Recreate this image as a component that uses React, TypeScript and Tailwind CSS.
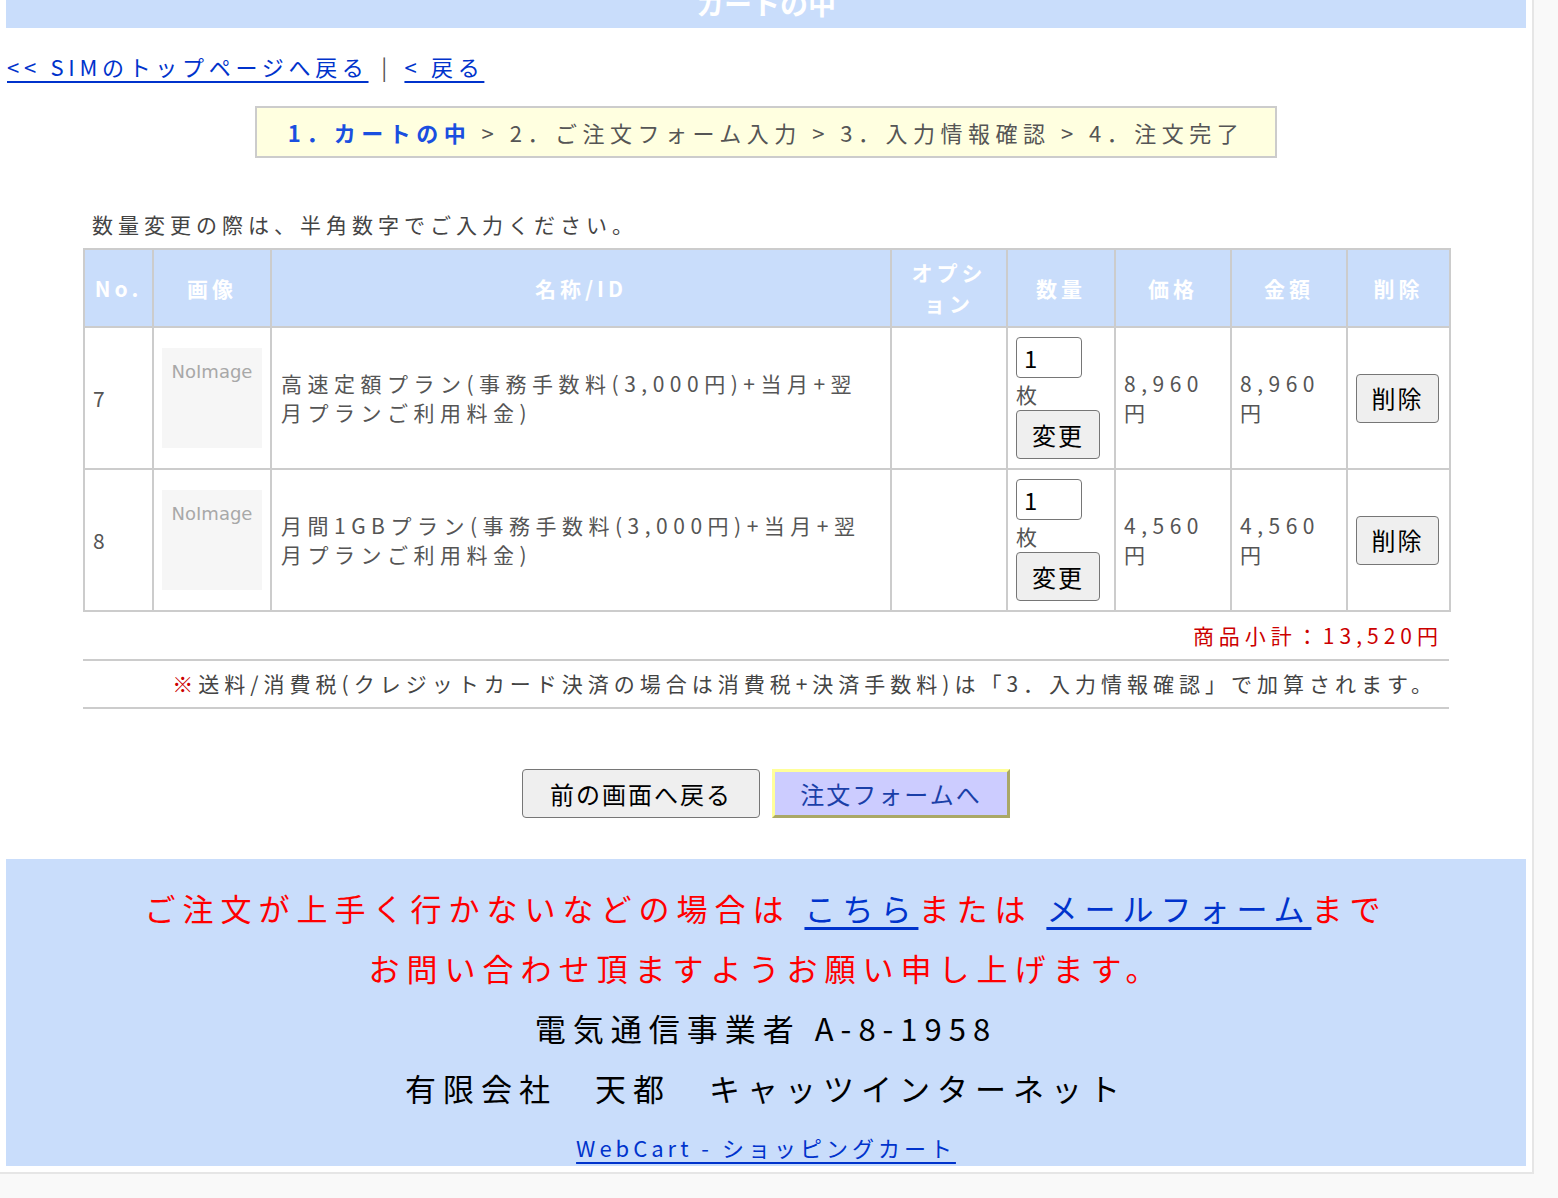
import React from "react";

const items = [
	{
		no: 7,
		name: ["高速定額プラン(事務手数料(3,000円)+当月+翌", "月プランご利用料金)"],
		price: "8,960",
	},
	{
		no: 8,
		name: ["月間1GBプラン(事務手数料(3,000円)+当月+翌", "月プランご利用料金)"],
		price: "4,560",
	},
];

const th =
	"border-2 border-[#cccccc] bg-[#c9ddfb] text-white font-bold text-[21px] tracking-[4px] leading-[31px] text-center align-middle p-0";
const td = "border-2 border-[#cccccc] align-middle px-[8px] py-0";

function GrayButton({ label, className = "" }: { label: string; className?: string }) {
	return (
		<button
			className={`h-[49px] rounded-[4px] border border-[#767676] bg-[#efefef] text-black text-[24px] tracking-[2px] leading-none ${className}`}
		>
			{label}
		</button>
	);
}

export default function App() {
	return (
		<div className="min-h-[1198px] bg-[#f9f9f9] font-['Noto_Sans_CJK_JP','Noto_Sans',sans-serif] text-[#444444]">
			<div className="w-[1534px] bg-white border-r-2 border-b-2 border-[#e6e6e6] px-[6px] pb-[6px]">
				{/* title bar, page is scrolled a little */}
				<div className="h-[28px] overflow-hidden bg-[#c9ddfb] text-center">
					<div className="-mt-[15px] text-[28px] font-bold leading-[36px] text-white">
						カートの中
					</div>
				</div>

				<div className="mt-[23px] pl-[1px] text-[22px] leading-[30px] tracking-[4.7px]">
					<a href="#" className="text-[#0033cc] underline decoration-[2px] underline-offset-[5px]">
						&lt;&lt; SIMのトップページへ戻る
					</a>
					<span className="text-[#555555] mx-[3px]"> | </span>
					<a href="#" className="text-[#0033cc] underline decoration-[2px] underline-offset-[5px]">
						&lt; 戻る
					</a>
				</div>

				<div className="mx-auto mt-[25px] flex h-[52px] w-[1022px] items-center justify-center border-2 border-[#cccccc] bg-[#ffffe0] text-[22px] tracking-[5.5px] text-[#555555]">
					<span className="font-bold text-[#1a4fe0]">1．カートの中</span>
					<span>&nbsp;&gt; 2．ご注文フォーム入力 &gt; 3．入力情報確認 &gt; 4．注文完了</span>
				</div>

				<div className="mx-auto w-[1366px]">
					<div className="mt-[51px] pl-[9px] text-[21px] leading-[30px] tracking-[5px]">
						数量変更の際は、半角数字でご入力ください。
					</div>

					<table className="mt-[9px] w-[1366px] table-fixed border-collapse">
						<colgroup>
							<col className="w-[69px]" />
							<col className="w-[118px]" />
							<col className="w-[620px]" />
							<col className="w-[116px]" />
							<col className="w-[108px]" />
							<col className="w-[116px]" />
							<col className="w-[116px]" />
							<col className="w-[103px]" />
						</colgroup>
						<thead>
							<tr className="h-[78px]">
								<th className={th}>No.</th>
								<th className={th}>画像</th>
								<th className={th}>名称/ID</th>
								<th className={th}>
									オプシ
									<br />
									ョン
								</th>
								<th className={th}>数量</th>
								<th className={th}>価格</th>
								<th className={th}>金額</th>
								<th className={th}>削除</th>
							</tr>
						</thead>
						<tbody className="text-[21px] leading-[29px] tracking-[5.5px] text-[#555555]">
							{items.map((it) => (
								<tr key={it.no} className="h-[142px]">
									<td className={td}>{it.no}</td>
									<td className={td}>
										<div className="h-[100px] w-[100px] bg-[#f6f6f6] pt-[12px] text-center font-['DejaVu_Sans',sans-serif] text-[18px] leading-[24px] tracking-[0px] text-[#a8a8a8]">
											NoImage
										</div>
									</td>
									<td className={`${td} pl-[9px]`}>
										{it.name[0]}
										<br />
										{it.name[1]}
									</td>
									<td className={td}></td>
									<td className={td}>
										<input
											defaultValue="1"
											className="block h-[41px] w-[66px] rounded-[4px] border border-[#767676] bg-white px-[7px] text-[24px] tracking-normal text-black"
										/>
										<div className="h-[32px] leading-[32px]">枚</div>
										<GrayButton label="変更" className="w-[84px]" />
									</td>
									<td className={td}>
										{it.price}
										<br />円
									</td>
									<td className={td}>
										{it.price}
										<br />円
									</td>
									<td className={td}>
										<GrayButton label="削除" className="w-[83px]" />
									</td>
								</tr>
							))}
						</tbody>
					</table>

					<div className="flex h-[47px] items-center justify-end pr-[6px] text-[21px] tracking-[5px] text-[#cc0000]">
						商品小計：13,520円
					</div>
					<div className="flex h-[50px] items-center justify-end border-y-2 border-[#cccccc] pr-[12px] text-[21px] tracking-[5px]">
						<span className="text-[#cc0000]">※</span>
						送料/消費税(クレジットカード決済の場合は消費税+決済手数料)は「3．入力情報確認」で加算されます。
					</div>
				</div>

				<div className="mt-[60px] flex justify-center gap-[12px]">
					<GrayButton label="前の画面へ戻る" className="w-[238px]" />
					<button className="h-[49px] w-[238px] border-[3px] border-t-[#ffff99] border-l-[#ffff99] border-b-[#aaa866] border-r-[#aaa866] bg-[#ccccff] text-[24px] leading-none tracking-[2px] text-[#1a3fa8]">
						注文フォームへ
					</button>
				</div>

				<div className="mt-[41px] h-[307px] bg-[#c9ddfb] pt-[19px] text-center">
					<div className="text-[31px] leading-[60px] tracking-[7px] text-[#ff0000]">
						ご注文が上手く行かないなどの場合は{" "}
						<a href="#" className="text-[#0033cc] underline decoration-[3px] underline-offset-[6px]">
							こちら
						</a>
						または{" "}
						<a href="#" className="text-[#0033cc] underline decoration-[3px] underline-offset-[6px]">
							メールフォーム
						</a>
						まで
					</div>
					<div className="text-[31px] leading-[60px] tracking-[7px] text-[#ff0000]">
						お問い合わせ頂ますようお願い申し上げます。
					</div>
					<div className="text-[31px] leading-[60px] tracking-[7px] text-black">
						電気通信事業者 A-8-1958
					</div>
					<div className="text-[31px] leading-[60px] tracking-[7px] text-black">
						有限会社　天都　キャッツインターネット
					</div>
					<div className="mt-[9px] text-[22px] leading-[40px] tracking-[4px]">
						<a href="#" className="text-[#0033cc] underline decoration-[2px] underline-offset-[5px]">
							WebCart - ショッピングカート
						</a>
					</div>
				</div>
			</div>
		</div>
	);
}
